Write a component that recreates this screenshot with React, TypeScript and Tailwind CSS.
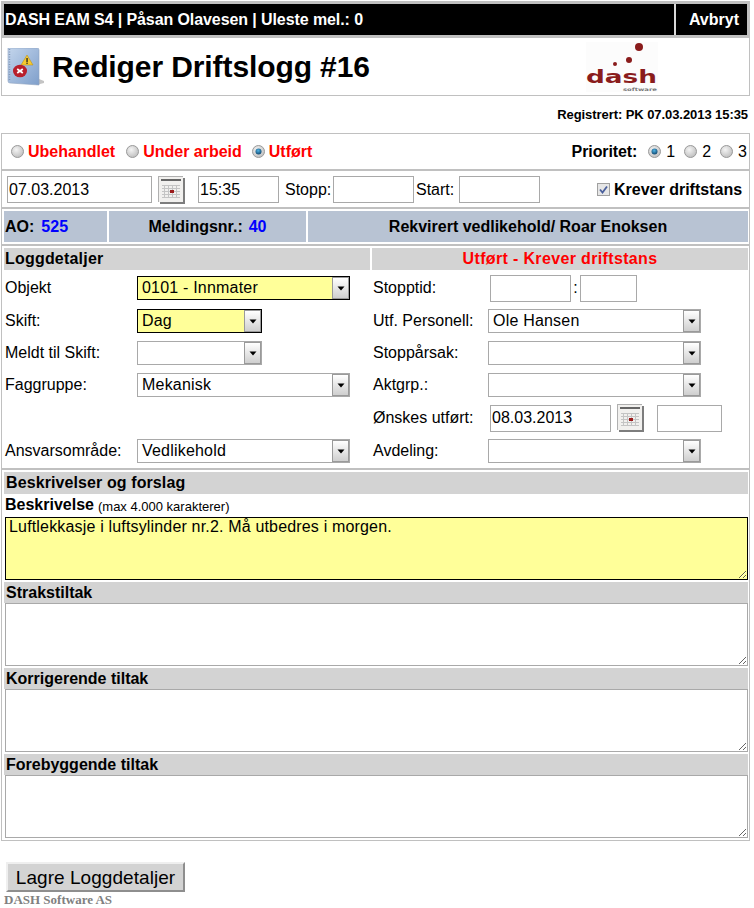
const labelCls = 'text-base text-black';

function Radio({ checked }: { checked?: boolean }) {
  return (
    <svg width="13" height="13" viewBox="0 0 13 13" className="shrink-0">
      <defs>
        <radialGradient id="rg" cx="40%" cy="35%" r="70%">
          <stop offset="0%" stopColor="#f4f4f4" />
          <stop offset="100%" stopColor="#bdbdbd" />
        </radialGradient>
        <radialGradient id="rb" cx="45%" cy="35%" r="70%">
          <stop offset="0%" stopColor="#4fb4e6" />
          <stop offset="100%" stopColor="#0b3f66" />
        </radialGradient>
      </defs>
      <circle cx="6.5" cy="6.5" r="6" fill="url(#rg)" stroke="#9a9a9a" />
      {checked && <circle cx="6.5" cy="6.5" r="3" fill="url(#rb)" />}
    </svg>
  );
}

function CalendarIcon() {
  return (
    <svg width="27" height="28" viewBox="0 0 27 28" className="shrink-0">
      <rect x="0" y="0" width="25" height="26" fill="#b0b0b0" />
      <rect x="2" y="2" width="25" height="26" fill="#7d7d7d" />
      <rect x="1" y="1" width="24" height="25" fill="#f1f0ee" />
      <rect x="3" y="3" width="20" height="2" fill="#666" />
      <path d="M4 9.5h18M4 12.5h18M4 15.5h18M4 18.5h18M4 21.5h18M6.5 9v13M10.5 9v13M14.5 9v13M18.5 9v13" stroke="#c4c4c4" strokeWidth="1" />
      <rect x="12" y="14" width="4" height="3" fill="#9c1c1c" />
    </svg>
  );
}

function BookIcon() {
  return (
    <svg width="38" height="38" viewBox="0 0 38 38" className="shrink-0">
      <defs>
        <linearGradient id="bk" x1="0" y1="0" x2="1" y2="1">
          <stop offset="0%" stopColor="#c3d5ec" />
          <stop offset="100%" stopColor="#7f9fcb" />
        </linearGradient>
      </defs>
      <path d="M32 31l5 2v2l-8 2z" fill="#c4c4c4" />
      <path d="M1 0h29a2 2 0 0 1 2 2v35l-29-2a2 2 0 0 1-2-2z" fill="url(#bk)" stroke="#8ea3c0" strokeWidth="0.6" />
      <path d="M2.5 1v32" stroke="#8296b5" strokeWidth="1.5" strokeDasharray="1 1.5" />
      <path d="M20 7l6 10H14z" fill="#f6c92e" stroke="#b58a12" strokeWidth="0.5" />
      <rect x="19.4" y="10" width="1.3" height="4" fill="#222" />
      <rect x="19.4" y="14.6" width="1.3" height="1.3" fill="#222" />
      <ellipse cx="13" cy="23" rx="7" ry="6.3" fill="#b81f2c" />
      <path d="M10.2 21l5.6 4M15.8 21l-5.6 4" stroke="#fff" strokeWidth="1.8" />
    </svg>
  );
}

function DashLogo() {
  return (
    <svg width="72" height="50" viewBox="0 0 72 50" className="shrink-0">
      <rect width="72" height="50" fill="#fcfcfc" />
      <circle cx="53" cy="5" r="4" fill="#8a1c1c" />
      <circle cx="43" cy="18" r="3" fill="#8a1c1c" />
      <circle cx="29" cy="22" r="2" fill="#8a1c1c" />
      <text x="0" y="41" fontFamily="DejaVu Sans, sans-serif" fontSize="18" fontWeight="700" fill="#8a1c1c" textLength="71" lengthAdjust="spacingAndGlyphs">
        dash
      </text>
      <text x="37" y="48.5" fontFamily="DejaVu Sans, sans-serif" fontSize="4.5" fontWeight="700" fill="#777" textLength="34" lengthAdjust="spacingAndGlyphs">
        software
      </text>
    </svg>
  );
}

function FakeSelect({ value, w, required }: { value?: string; w: string; required?: boolean }) {
  return (
    <div className={`flex h-6 items-stretch border ${w} ${required ? 'border-black bg-[#ffff99]' : 'border-[#a9a9a9] bg-white'}`}>
      <span className="flex-1 pl-[4px] text-base leading-[21px] tracking-[0.2px] text-black">{value}</span>
      <span className="flex w-[17px] items-center justify-center border border-[#9a9a9a] bg-gradient-to-b from-white to-[#cfcfcf]">
        <svg width="8" height="5" viewBox="0 0 8 5">
          <path d="M0.5 0.5h7L4 4.5z" fill="#000" />
        </svg>
      </span>
    </div>
  );
}

function TextBox({ value, w }: { value?: string; w: string }) {
  return (
    <input
      defaultValue={value}
      className={`h-[27px] border border-[#a9a9a9] bg-white pl-px text-base text-black outline-none ${w}`}
    />
  );
}

function Field({ label, children, w, first }: { label: string; children?: React.ReactNode; w: string; first?: boolean }) {
  return (
    <div className={`flex items-center ${first ? 'h-[33px] pb-px' : 'h-8'}`}>
      <span className={`${labelCls} ${w}`}>{label}</span>
      {children}
    </div>
  );
}

function NoteBlock({ title, hint, yellow }: { title: string; hint?: string; yellow?: boolean }) {
  return (
    <div>
      {yellow ? (
        <div className="flex h-[23px] items-end pl-px text-base font-bold text-black">
          {title}
          <span className="mb-px ml-1 text-[13px] font-normal">{hint}</span>
        </div>
      ) : (
        <div className="flex h-[21px] items-center bg-[#d3d3d3] pl-[2px] text-base font-bold text-black">{title}</div>
      )}
      <textarea
        defaultValue={yellow ? 'Luftlekkasje i luftsylinder nr.2. Må utbedres i morgen.' : ''}
        className={`ml-px block h-[63px] w-[calc(100%-1px)] border px-[3px] text-base leading-[18px] tracking-[0.17px] text-black outline-none ${
          yellow ? 'border-black bg-[#ffff99]' : 'border-[#a9a9a9] bg-white'
        }`}
      />
    </div>
  );
}

export default function App() {
  return (
    <div className="min-h-[908px] w-[754px] bg-white pl-px pt-px font-['Liberation_Sans',Arial,sans-serif] text-black">
      <div className="w-[749px]">
        {/* top bar */}
        <div className="flex h-[37px] gap-[2px] border-[3px] border-[#c0c0c0] bg-[#d8d8d8] text-base font-bold text-white">
          <div className="flex flex-1 items-center bg-black pl-px tracking-[-0.09px]">DASH EAM S4 | Påsan Olavesen | Uleste mel.: 0</div>
          <div className="flex w-[71px] items-center justify-end bg-black pr-[8px]">Avbryt</div>
        </div>

        <div className="flex h-[58px] items-center justify-between border border-t-0 border-[#c0c0c0] pl-[5px] pr-[91px]">
          <div className="flex items-center gap-[7px]">
            <BookIcon />
            <h1 className="text-3xl font-bold tracking-[-0.1px]">Rediger Driftslogg #16</h1>
          </div>
          <DashLogo />
        </div>

        <div className="flex h-[37px] items-center justify-end pr-[2px] text-[13px] font-bold tracking-[-0.07px]">Registrert: PK 07.03.2013 15:35</div>

        <div className="border border-[#c0c0c0]">
          {/* status */}
          <div className="flex h-[37px] items-center justify-between border-b-2 border-[#c0c0c0] pl-[9px] pr-[2px] text-base">
            <div className="flex items-center gap-[11px] font-bold text-[#ff0000]">
              <span className="flex items-center gap-1"><Radio />Ubehandlet</span>
              <span className="flex items-center gap-1"><Radio />Under arbeid</span>
              <span className="-ml-px flex items-center gap-1"><Radio checked />Utført</span>
            </div>
            <div className="flex items-center gap-[9px]">
              <span className="mr-[2px] font-bold tracking-[-0.1px]">Prioritet:</span>
              <span className="flex items-center gap-[5px]"><Radio checked />1</span>
              <span className="flex items-center gap-[5px]"><Radio />2</span>
              <span className="flex items-center gap-[5px]"><Radio />3</span>
            </div>
          </div>

          {/* date row */}
          <div className="flex h-[38px] items-center border-b-2 border-[#c0c0c0] pl-[5px] pt-px text-base">
            <TextBox value="07.03.2013" w="w-[145px]" />
            <span className="ml-[6px]"><CalendarIcon /></span>
            <span className="ml-[13px]"><TextBox value="15:35" w="w-[81px]" /></span>
            <span className="ml-[6px] w-[48px]">Stopp:</span>
            <TextBox w="w-[81px]" />
            <span className="ml-[2px] w-[43px]">Start:</span>
            <TextBox w="w-[81px]" />
            <span className="ml-[57px] flex items-center gap-1 font-bold">
              <svg width="13" height="13" viewBox="0 0 13 13">
                <rect x="0.5" y="0.5" width="12" height="12" fill="#e6e6e6" stroke="#a0a0a0" />
                <path d="M3 6.5l2.5 3L10 3.5" fill="none" stroke="#4a5f9c" strokeWidth="1.8" />
              </svg>
              Krever driftstans
            </span>
          </div>

          {/* info row */}
          <div className="flex h-[37px] gap-[2px] border-b-2 border-[#c0c0c0] pb-[2px] pl-[2px] pr-px pt-[2px] text-base font-bold">
            <div className="flex w-[103px] items-center gap-[7px] bg-[#b8c3d3] pl-px">
              AO:<span className="text-[#0000ff]">525</span>
            </div>
            <div className="flex w-[197px] items-center justify-center gap-[6px] bg-[#b8c3d3]">
              Meldingsnr.:<span className="text-[#0000ff]">40</span>
            </div>
            <div className="flex flex-1 items-center justify-center bg-[#b8c3d3]">Rekvirert vedlikehold/ Roar Enoksen</div>
          </div>

          {/* details */}
          <div className="grid grid-cols-[366px_376px] gap-x-[2px] border-b-2 border-[#c0c0c0] pb-px pl-[2px] pr-px pt-[2px]">
            <div>
              <div className="flex h-[22px] items-center bg-[#d3d3d3] pl-px text-base font-bold tracking-[0.2px]">Loggdetaljer</div>
              <div className="pt-[2px]">
                <Field first label="Objekt" w="w-[133px] pl-px"><FakeSelect value="0101 - Innmater" w="w-[213px]" required /></Field>
                <Field label="Skift:" w="w-[133px] pl-px"><FakeSelect value="Dag" w="w-[125px]" required /></Field>
                <Field label="Meldt til Skift:" w="w-[133px] pl-px"><FakeSelect w="w-[125px]" /></Field>
                <Field label="Faggruppe:" w="w-[133px] pl-px"><FakeSelect value="Mekanisk" w="w-[213px]" /></Field>
                <div className="h-[34px]" />
                <Field label="Ansvarsområde:" w="w-[133px] pl-px"><FakeSelect value="Vedlikehold" w="w-[213px]" /></Field>
              </div>
            </div>
            <div>
              <div className="flex h-[22px] items-center justify-center bg-[#d3d3d3] text-base font-bold tracking-[0.35px] text-[#ff0000]">Utført - Krever driftstans</div>
              <div className="pt-[2px]">
                <Field first label="Stopptid:" w="w-[118px] pl-px">
                  <TextBox w="w-[81px]" />
                  <span className="w-[9px] text-center text-base">:</span>
                  <TextBox w="w-[57px]" />
                </Field>
                <Field label="Utf. Personell:" w="w-[116px] pl-px"><FakeSelect value="Ole Hansen" w="w-[213px]" /></Field>
                <Field label="Stoppårsak:" w="w-[116px] pl-px"><FakeSelect w="w-[213px]" /></Field>
                <Field label="Aktgrp.:" w="w-[116px] pl-px"><FakeSelect w="w-[213px]" /></Field>
                <div className="flex h-[34px] items-center">
                  <span className={`${labelCls} w-[118px] pl-px`}>Ønskes utført:</span>
                  <TextBox value="08.03.2013" w="w-[121px]" />
                  <span className="ml-[6px]"><CalendarIcon /></span>
                  <span className="ml-[13px]"><TextBox w="w-[65px]" /></span>
                </div>
                <Field label="Avdeling:" w="w-[116px] pl-px"><FakeSelect w="w-[213px]" /></Field>
              </div>
            </div>
          </div>

          {/* descriptions */}
          <div className="py-[2px] pl-[2px] pr-px">
            <div className="flex h-[22px] items-center bg-[#d3d3d3] pl-[2px] text-base font-bold tracking-[0.1px]">Beskrivelser og forslag</div>
            <NoteBlock title="Beskrivelse" hint="(max 4.000 karakterer)" yellow />
            <div className="mt-[2px]"><NoteBlock title="Strakstiltak" /></div>
            <div className="mt-[2px]"><NoteBlock title="Korrigerende tiltak" /></div>
            <div className="mt-[2px]"><NoteBlock title="Forebyggende tiltak" /></div>
          </div>
        </div>

        <button className="ml-[5px] mt-[21px] block h-[30px] w-[179px] border-2 border-b-[#8e8e8e] border-l-[#efefef] border-r-[#8e8e8e] border-t-[#efefef] bg-[#d3d3d3] text-[19px] tracking-[0.05px] text-black">
          Lagre Loggdetaljer
        </button>
        <div className="pl-[3px] font-['Liberation_Serif',serif] text-[13px] font-bold leading-[16px] text-[#808080]">DASH Software AS</div>
      </div>
    </div>
  );
}
